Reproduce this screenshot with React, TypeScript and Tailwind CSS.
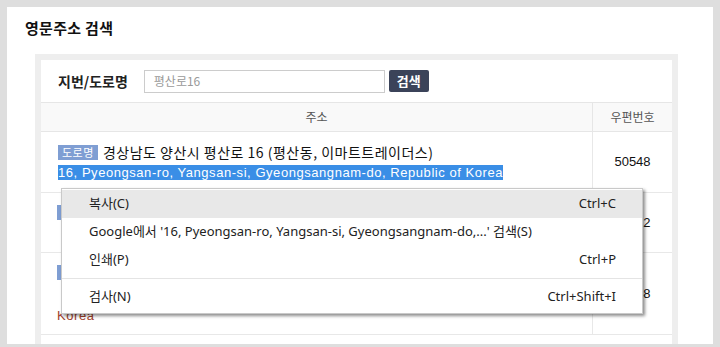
const kr = { fontFamily: '"Noto Sans CJK KR", "Noto Sans", sans-serif' }
const latin = { fontFamily: '"Liberation Sans", "Noto Sans CJK KR", sans-serif' }
const menuFont = { fontFamily: '"Noto Sans", "Noto Sans CJK KR", sans-serif' }

function Badge() {
  return (
    <span className="inline-flex h-[15px] items-center bg-[#7f9ed3] px-[4px] text-[11px] leading-none text-white">
      도로명
    </span>
  )
}

function MenuItem({ label, shortcut, active }: { label: string; shortcut?: string; active?: boolean }) {
  return (
    <div
      className={`flex h-[28px] items-center justify-between pl-[27px] pr-[26px] text-[13px] text-[#222] ${
        active ? 'bg-[#e8e8e8]' : ''
      }`}
    >
      <span>{label}</span>
      {shortcut && <span>{shortcut}</span>}
    </div>
  )
}

export default function App() {
  return (
    <div className="h-[347px] w-[720px] overflow-hidden bg-[#dedede] p-[7px] pb-0" style={kr}>
      <div className="h-[337px] bg-white pl-[18px] pr-[34px] pt-[11px]">
        <h1 className="text-[15px] font-bold leading-[20px] tracking-[0.3px] text-[#111]">영문주소 검색</h1>

        <div className="ml-[10px] mt-[16px] w-[643px] bg-[#eeeeee] px-[6px] pt-[6px]">
          <div className="relative h-[284px] bg-white">
            {/* search row */}
            <div className="flex h-[43px] items-center gap-[16px] border-b border-[#e6e6e6] pl-[17px]">
              <span className="text-[14px] font-bold text-[#222]">지번/도로명</span>
              <div className="flex items-center gap-[4px]">
                <div className="flex h-[23px] w-[241px] items-center border border-[#cccccc] px-[9px] text-[12px] text-[#9a9a9a]">
                  평산로16
                </div>
                <button className="flex h-[22px] w-[40px] items-center justify-center rounded-[2px] bg-[#3b4359] text-[13px] font-bold text-white">
                  검색
                </button>
              </div>
            </div>

            {/* header */}
            <div className="flex h-[29px] border-b border-[#e6e6e6] bg-[#f9f9f9] text-[12px] text-[#555]">
              <div className="flex flex-1 items-center justify-center border-r border-[#e6e6e6]">주소</div>
              <div className="flex w-[79px] items-center justify-center">우편번호</div>
            </div>

            {/* row 1 */}
            <div className="flex h-[61px] border-b border-[#e8e8e8]">
              <div className="flex flex-1 flex-col justify-center gap-[5px] border-r border-[#e8e8e8] pl-[17px]">
                <div className="flex items-center gap-[5px] text-[14px] leading-[15px] tracking-[0.5px] text-[#111]">
                  <Badge />
                  <span>경상남도 양산시 평산로 16 (평산동, 이마트트레이더스)</span>
                </div>
                <div className="text-[13px] leading-[15px] tracking-[0.55px]" style={latin}>
                  <span className="bg-[#3a8ee6] text-white">
                    16, Pyeongsan-ro, Yangsan-si, Gyeongsangnam-do, Republic of Korea
                  </span>
                </div>
              </div>
              <div className="flex w-[79px] items-center justify-center text-[13px] text-[#111]" style={latin}>
                50548
              </div>
            </div>

            {/* row 2 */}
            <div className="flex h-[60px] border-b border-[#e8e8e8]">
              <div className="flex flex-1 flex-col justify-center gap-[5px] border-r border-[#e8e8e8] pl-[16px]">
                <div className="flex items-center gap-[5px] text-[14px] leading-[15px] tracking-[0.5px] text-[#111]">
                  <Badge />
                  <span>경상남도 양산시 평산로 16 (평산동)</span>
                </div>
                <div className="pl-[6px] text-[13px] leading-[15px] tracking-[0.55px] text-[#333]" style={latin}>
                  16, Pyeongsan-ro, Yangsan-si, Gyeongsangnam-do, Korea
                </div>
              </div>
              <div className="flex w-[79px] items-center justify-center text-[13px] text-[#111]" style={latin}>
                50512
              </div>
            </div>

            {/* row 3 */}
            <div className="flex h-[82px] border-b border-[#e8e8e8]">
              <div className="flex flex-1 flex-col justify-center gap-[6px] border-r border-[#e8e8e8] pl-[16px] pt-[3px]">
                <div className="flex items-center gap-[5px] text-[14px] leading-[15px] tracking-[0.5px] text-[#111]">
                  <Badge />
                  <span>경상남도 양산시 평산로 16 (평산동)</span>
                </div>
                <div className="text-[13px] leading-[20px] tracking-[0.55px] text-[#a0402c]" style={latin}>
                  <div className="pl-[6px]">16, Pyeongsan-ro, Yangsan-si, Gyeongsangnam-do, Republic of</div>
                  <div>Korea</div>
                </div>
              </div>
              <div className="flex w-[79px] items-center justify-center text-[13px] text-[#111]" style={latin}>
                50538
              </div>
            </div>

            {/* context menu */}
            <div
              className="absolute left-[20px] top-[128px] w-[582px] border border-[#c9c9c9] bg-white pb-[2px] pt-[1px] shadow-[2px_2px_3px_rgba(0,0,0,0.45)]"
              style={menuFont}
            >
              <MenuItem label="복사(C)" shortcut="Ctrl+C" active />
              <MenuItem label="Google에서 '16, Pyeongsan-ro, Yangsan-si, Gyeongsangnam-do,...' 검색(S)" />
              <MenuItem label="인쇄(P)" shortcut="Ctrl+P" />
              <div className="my-[4px] h-px bg-[#e4e4e4]" />
              <MenuItem label="검사(N)" shortcut="Ctrl+Shift+I" />
            </div>
          </div>
        </div>
      </div>
    </div>
  )
}
